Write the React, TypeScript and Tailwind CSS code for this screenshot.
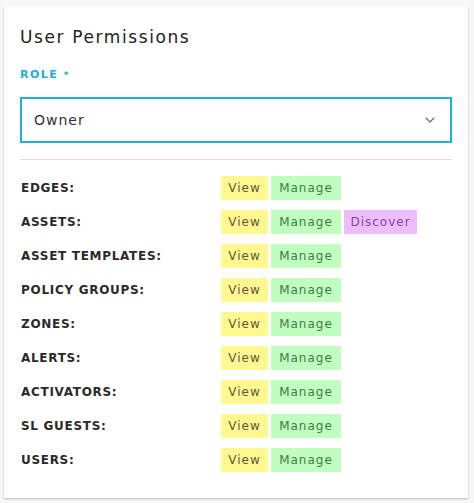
import React from 'react';
import { ChevronDown } from 'lucide-react';

type Perm = 'view' | 'manage' | 'discover';

const rows: { label: string; perms: Perm[] }[] = [
  { label: 'EDGES:', perms: ['view', 'manage'] },
  { label: 'ASSETS:', perms: ['view', 'manage', 'discover'] },
  { label: 'ASSET TEMPLATES:', perms: ['view', 'manage'] },
  { label: 'POLICY GROUPS:', perms: ['view', 'manage'] },
  { label: 'ZONES:', perms: ['view', 'manage'] },
  { label: 'ALERTS:', perms: ['view', 'manage'] },
  { label: 'ACTIVATORS:', perms: ['view', 'manage'] },
  { label: 'SL GUESTS:', perms: ['view', 'manage'] },
  { label: 'USERS:', perms: ['view', 'manage'] },
];

const chip: Record<Perm, { text: string; cls: string }> = {
  view: { text: 'View', cls: 'w-[47px] bg-[#fff78f] text-[#5c5a3a]' },
  manage: { text: 'Manage', cls: 'w-[70px] bg-[#c0ffc0] text-[#3f7a45]' },
  discover: { text: 'Discover', cls: 'w-[73px] bg-[#eebdfd] text-[#8a3fa3]' },
};

const PermChip: React.FC<{ type: Perm }> = ({ type }) => (
  <span className={`flex h-6 items-center justify-center text-[12px] tracking-[1px] ${chip[type].cls}`}>
    {chip[type].text}
  </span>
);

export default function App() {
  return (
    <div className="min-h-[503px] bg-[#f7f7f7] px-1 pt-[6px] font-['DejaVu_Sans',sans-serif]">
      <div className="w-[464px] bg-white px-4 pb-[26px] pt-[18px] shadow-[0_1px_2px_rgba(0,0,0,0.25)]">
        <h2 className="text-[17px] leading-[26px] tracking-[1.6px] text-[#222]">User Permissions</h2>

        <div className="mt-[17px] text-[11px] font-bold leading-4 tracking-[1.5px] text-[#22aad9]">
          ROLE <span className="align-top text-[9px]">*</span>
        </div>

        <div className="mt-[14px] flex h-[46px] items-center justify-between border-2 border-[#1eaed6] pl-3 pr-3">
          <span className="text-[14px] tracking-[1px] text-[#333]">Owner</span>
          <ChevronDown size={16} strokeWidth={1.6} className="text-[#666]" />
        </div>

        <div className="mt-[16px] h-px bg-[#dedede]" />

        <div className="mt-[16px] flex flex-col gap-[10px]">
          {rows.map((r) => (
            <div key={r.label} className="flex items-center">
              <span className="w-[201px] pl-px text-[12px] font-bold tracking-[0.7px] text-[#2a2a2a]">{r.label}</span>
              <div className="flex gap-[3px]">
                {r.perms.map((p) => (
                  <PermChip key={p} type={p} />
                ))}
              </div>
            </div>
          ))}
        </div>
      </div>
    </div>
  );
}
